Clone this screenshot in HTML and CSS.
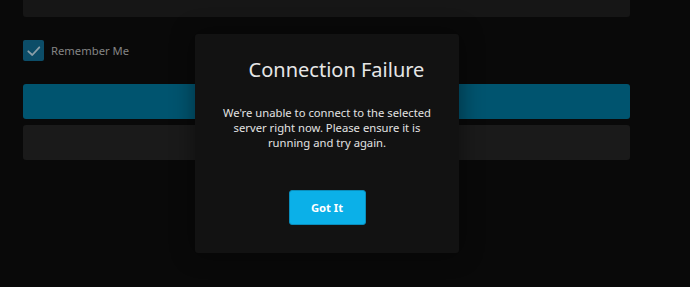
FILE: index.html
```html
<!DOCTYPE html>
<html lang="en">
<head>
<meta charset="utf-8">
<title>Connection Failure</title>
<link rel="stylesheet" href="styles.css">
</head>
<body>
  <main class="page">
    <form class="login-form">
      <div class="field"></div>
      <label class="remember">
        <span class="checkbox">
          <svg width="21" height="21" viewBox="0 0 21 21"><path d="M5.3 11.3 L9.3 15 L16.3 7.3" fill="none" stroke="#8a9ea8" stroke-width="1.8" stroke-linecap="round" stroke-linejoin="round"/></svg>
        </span>
        <span class="remember-label">Remember Me</span>
      </label>
      <div class="btn btn-primary"></div>
      <div class="btn btn-secondary"></div>
    </form>
  </main>
  <div class="dialog" role="dialog">
    <h2 class="dialog-title">Connection Failure</h2>
    <p class="dialog-text">We're unable to connect to the selected server right now. Please ensure it is running and try again.</p>
    <div class="dialog-actions">
      <button class="btn-ok" type="button">Got It</button>
    </div>
  </div>
</body>
</html>
```

FILE: styles.css
```css
html, body {
  margin: 0;
  padding: 0;
  background: #090909;
  height: 100%;
  overflow: hidden;
  font-family: "Noto Sans", "Open Sans", sans-serif;
}

.page {
  padding: 0 60px 0 23px;
}

.login-form {
  display: flex;
  flex-direction: column;
  width: 607px;
}

.field {
  height: 40px;
  margin-top: -23px;
  background: #161616;
  border-radius: 3px;
}

.remember {
  display: flex;
  align-items: center;
  gap: 7px;
  margin-top: 22px;
  height: 22px;
}

.checkbox {
  width: 21px;
  height: 21px;
  background: #0c4d68;
  border-radius: 2px;
  display: block;
}

.checkbox svg {
  display: block;
}

.remember-label {
  color: #848484;
  font-size: 11.25px;
  line-height: 15px;
}

.btn {
  height: 35px;
  border-radius: 3px;
}

.btn-primary {
  margin-top: 23px;
  background: #00546f;
}

.btn-secondary {
  margin-top: 6px;
  background: #1a1a1a;
}

.dialog {
  position: absolute;
  left: 195px;
  top: 34px;
  width: 264px;
  height: 219px;
  box-sizing: border-box;
  padding: 22px 24px 28px;
  background: #121212;
  border-radius: 3px;
  box-shadow: 0 0 24px rgba(0, 0, 0, 0.45);
  display: flex;
  flex-direction: column;
  align-items: stretch;
}

.dialog-title {
  margin: 0;
  padding-left: 19px;
  text-align: center;
  font-weight: 400;
  font-size: 20px;
  line-height: 27px;
  color: #e6e6e6;
}

.dialog-text {
  margin: 22px 0 0;
  text-align: center;
  font-size: 11.25px;
  line-height: 15px;
  color: #e2e2e2;
}

.dialog-actions {
  margin-top: 40px;
  display: flex;
  justify-content: center;
}

.btn-ok {
  width: 77px;
  height: 35px;
  box-sizing: border-box;
  border: 1px solid #0a8dbb;
  border-radius: 3px;
  background: #0bb0e8;
  color: #ffffff;
  font-family: "Noto Sans", "Open Sans", sans-serif;
  font-weight: 700;
  font-size: 11.25px;
  padding: 0;
}
```
